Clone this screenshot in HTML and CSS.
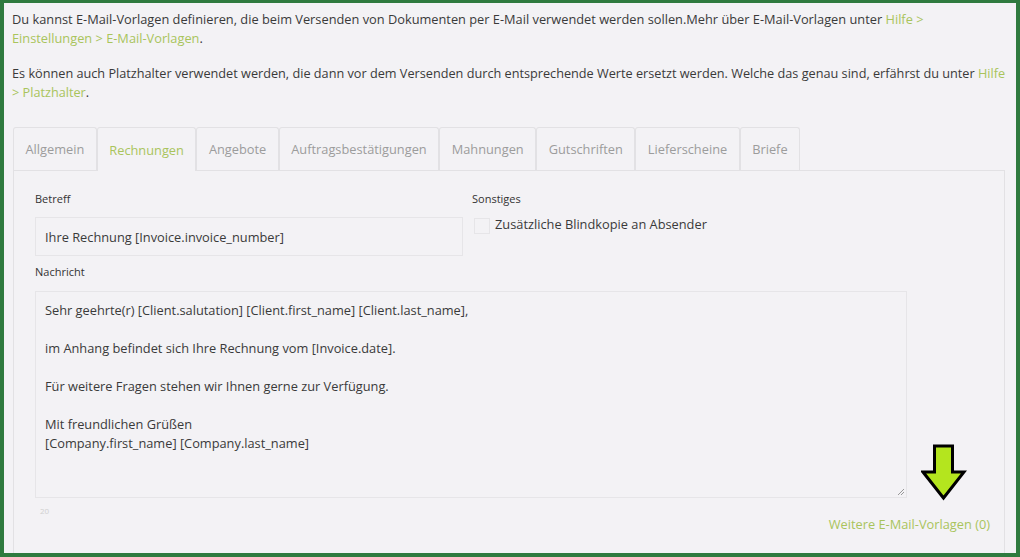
FILE: index.html
```html
<!DOCTYPE html>
<html lang="de">
<head>
<meta charset="utf-8">
<title>E-Mail-Vorlagen</title>
<link rel="stylesheet" href="styles.css">
</head>
<body>
<div class="frame">
  <div class="content">
    <p class="intro">Du kannst E-Mail-Vorlagen definieren, die beim Versenden von Dokumenten per E-Mail verwendet werden sollen.Mehr über E-Mail-Vorlagen unter <a class="link">Hilfe &gt;<br>Einstellungen &gt; E-Mail-Vorlagen</a>.</p>
    <p class="intro intro-2">Es können auch Platzhalter verwendet werden, die dann vor dem Versenden durch entsprechende Werte ersetzt werden. Welche das genau sind, erfährst du unter <a class="link">Hilfe<br>&gt; Platzhalter</a>.</p>

    <ul class="tabs">
      <li class="tab">Allgemein</li>
      <li class="tab active">Rechnungen</li>
      <li class="tab">Angebote</li>
      <li class="tab">Auftragsbestätigungen</li>
      <li class="tab">Mahnungen</li>
      <li class="tab">Gutschriften</li>
      <li class="tab">Lieferscheine</li>
      <li class="tab">Briefe</li>
    </ul>

    <div class="panel">
      <div class="row">
        <div class="col-subject">
          <div class="label">Betreff</div>
          <div class="input">Ihre Rechnung [Invoice.invoice_number]</div>
        </div>
        <div class="col-misc">
          <div class="label">Sonstiges</div>
          <div class="check-row">
            <span class="checkbox"></span>
            <span class="check-label">Zusätzliche Blindkopie an Absender</span>
          </div>
        </div>
      </div>
      <div class="label label-msg">Nachricht</div>
      <div class="textarea">
        <p>Sehr geehrte(r) [Client.salutation] [Client.first_name] [Client.last_name],</p>
        <p>im Anhang befindet sich Ihre Rechnung vom [Invoice.date].</p>
        <p>Für weitere Fragen stehen wir Ihnen gerne zur Verfügung.</p>
        <p>Mit freundlichen Grüßen<br>[Company.first_name] [Company.last_name]</p>
        <svg class="grip" width="8" height="8" viewBox="0 0 8 8"><path d="M7 1 L1 7 M7 4 L4 7" stroke="#999" stroke-width="1"/></svg>
      </div>
      <div class="counter">20</div>
      <div class="more-row">
        <a class="link more">Weitere E-Mail-Vorlagen (0)</a>
      </div>
      <svg class="arrow" width="46" height="58" viewBox="0 0 46 58">
        <path d="M13.5 2 H31.5 V28 H43 L22.5 54 L2 28 H13.5 Z" fill="#b4e51e" stroke="#000" stroke-width="3" stroke-linejoin="miter"/>
      </svg>
    </div>
  </div>
</div>
</body>
</html>
```

FILE: styles.css
```css
html, body {
  margin: 0;
  padding: 0;
}
body {
  font-family: "Open Sans", "Noto Sans", sans-serif;
  font-size: 12.8px;
  color: #3a3a3a;
  background: #f3f2f5;
}
.frame {
  width: 1020px;
  height: 557px;
  box-sizing: border-box;
  border: 4px solid #2f7a3f;
  border-top-width: 3px;
  background: #f3f2f5;
  overflow: hidden;
}
.content {
  padding: 7px 0 0 8px;
}
.intro {
  margin: 0 0 16px 0;
  line-height: 19px;
  white-space: nowrap;
}
.intro-2 {
  font-size: 12.7px;
}
.link {
  color: #a9c45c;
  text-decoration: none;
}
.tabs {
  list-style: none;
  margin: 25px 0 0 1px;
  padding: 0;
  display: flex;
  height: 43px;
}
.tab {
  box-sizing: border-box;
  height: 43px;
  padding: 0 11.5px;
  margin-right: 0;
  display: flex;
  align-items: center;
  font-size: 12.8px;
  color: #9c9c9c;
  border: 1px solid #e2e1e4;
  border-bottom: none;
  border-radius: 3px 3px 0 0;
  background: #f3f2f5;
}
.tab.active {
  color: #a9c45c;
  background: #f3f2f5;
  position: relative;
  height: 44px;
  z-index: 1;
}
.panel {
  position: relative;
  margin-left: 1px;
  width: 992px;
  height: 420px;
  box-sizing: border-box;
  border: 1px solid #e2e1e4;
  padding: 21px 21px 0 21px;
}
.row {
  display: flex;
}
.col-subject {
  width: 428px;
}
.col-misc {
  margin-left: 9px;
}
.label {
  font-size: 11px;
  line-height: 14px;
  color: #333;
  margin-bottom: 11px;
}
.input {
  box-sizing: border-box;
  height: 39px;
  border: 1px solid #e6e5e8;
  padding: 0 9px;
  display: flex;
  align-items: center;
  font-size: 12.8px;
  color: #3a3a3a;
}
.check-row {
  display: flex;
  align-items: flex-start;
  margin-top: -2px;
}
.checkbox {
  width: 14px;
  height: 14px;
  border: 1px solid #e6e5e8;
  margin: 3px 5px 0 2px;
}
.check-label {
  font-size: 12.8px;
  line-height: 18px;
}
.label-msg {
  margin-top: 9px;
  margin-bottom: 12px;
}
.textarea {
  position: relative;
  box-sizing: border-box;
  width: 872px;
  height: 207px;
  border: 1px solid #e6e5e8;
  padding: 9px 9px;
  font-size: 12.8px;
  line-height: 19px;
}
.textarea p {
  margin: 0 0 19px 0;
}
.grip {
  position: absolute;
  right: 1px;
  bottom: 1px;
}
.counter {
  font-size: 8px;
  color: #d0d0d0;
  margin: 7px 0 0 5px;
}
.more-row {
  display: flex;
  justify-content: flex-end;
  margin-right: -7px;
  margin-top: -1px;
}
.more {
  font-size: 12.8px;
}
.arrow {
  position: absolute;
  left: 907px;
  top: 273px;
}
```
